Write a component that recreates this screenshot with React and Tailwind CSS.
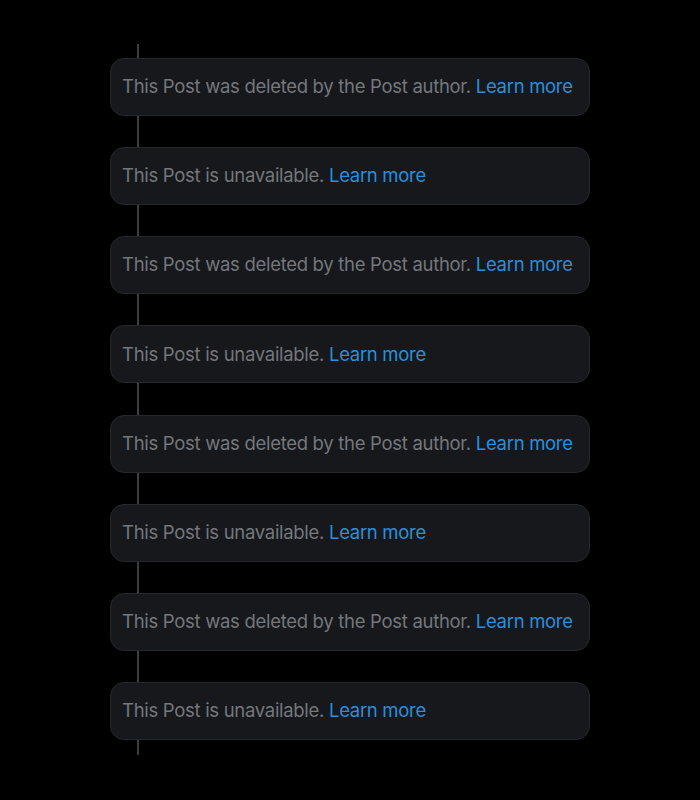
import React from 'react';

const posts = [
  'This Post was deleted by the Post author.',
  'This Post is unavailable.',
  'This Post was deleted by the Post author.',
  'This Post is unavailable.',
  'This Post was deleted by the Post author.',
  'This Post is unavailable.',
  'This Post was deleted by the Post author.',
  'This Post is unavailable.',
];

const Connector = ({ className }) => (
  <div className={`ml-[27px] w-[2px] bg-[#3b3d40] ${className}`} />
);

const App = () => {
  return (
    <div
      className="min-h-[800px] w-full bg-black pt-[44px]"
      style={{ fontFamily: 'Inter, "Noto Sans", sans-serif' }}
    >
      <div className="ml-[110px] w-[480px] flex flex-col">
        <Connector className="h-[14px]" />
        {posts.map((text, i) => (
          <React.Fragment key={i}>
            <div className="h-[58px] flex items-center rounded-[14px] border border-[#26282c] bg-[#16181c] px-[11px] text-[18.5px] tracking-[-0.3px] text-[#74777c]">
              <span>
                {text} <span className="text-[#2a8fdc]">Learn more</span>
              </span>
            </div>
            {i < posts.length - 1 ? (
              <Connector className="h-[31.15px]" />
            ) : (
              <Connector className="h-[15px]" />
            )}
          </React.Fragment>
        ))}
      </div>
    </div>
  );
};

export default App;
